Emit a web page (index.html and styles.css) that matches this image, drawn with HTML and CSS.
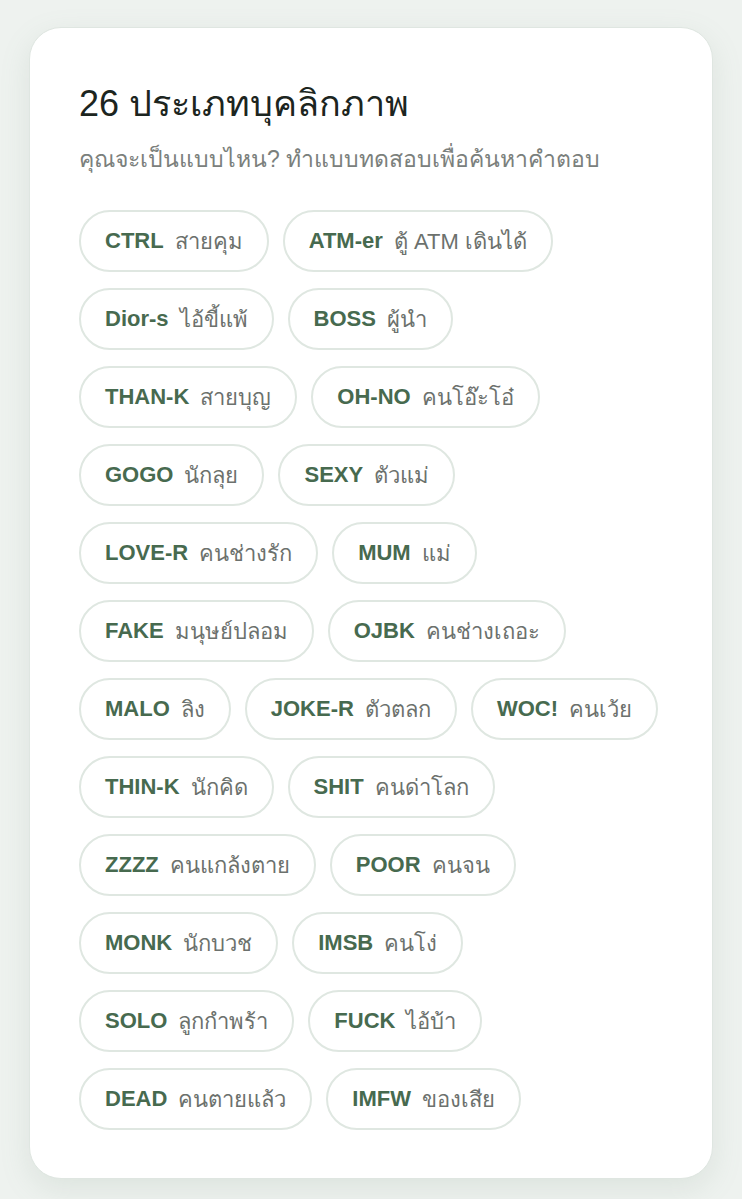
FILE: index.html
```html
<!DOCTYPE html>
<html lang="th">
<head>
  <meta charset="UTF-8" />
  <meta name="viewport" content="width=device-width, initial-scale=1" />
  <title>26 ประเภทบุคลิกภาพ</title>
  <link rel="stylesheet" href="styles.css">
</head>
<body>

  <div class="card">
    <h1>26 ประเภทบุคลิกภาพ</h1>
    <p class="sub">คุณจะเป็นแบบไหน? ทำแบบทดสอบเพื่อค้นหาคำตอบ</p>

    <div class="chips">
      <span class="chip"><b>CTRL</b> สายคุม</span>
      <span class="chip"><b>ATM-er</b> ตู้ ATM เดินได้</span>
      <span class="chip"><b>Dior-s</b> ไอ้ขี้แพ้</span>
      <span class="chip"><b>BOSS</b> ผู้นำ</span>
      <span class="chip"><b>THAN-K</b> สายบุญ</span>
      <span class="chip"><b>OH-NO</b> คนโอ๊ะโอ๋</span>
      <span class="chip"><b>GOGO</b> นักลุย</span>
      <span class="chip"><b>SEXY</b> ตัวแม่</span>
      <span class="chip"><b>LOVE-R</b> คนช่างรัก</span>
      <span class="chip"><b>MUM</b> แม่</span>
      <span class="chip"><b>FAKE</b> มนุษย์ปลอม</span>
      <span class="chip"><b>OJBK</b> คนช่างเถอะ</span>
      <span class="chip"><b>MALO</b> ลิง</span>
      <span class="chip"><b>JOKE-R</b> ตัวตลก</span>
      <span class="chip"><b>WOC!</b> คนเว้ย</span>
      <span class="chip"><b>THIN-K</b> นักคิด</span>
      <span class="chip"><b>SHIT</b> คนด่าโลก</span>
      <span class="chip"><b>ZZZZ</b> คนแกล้งตาย</span>
      <span class="chip"><b>POOR</b> คนจน</span>
      <span class="chip"><b>MONK</b> นักบวช</span>
      <span class="chip"><b>IMSB</b> คนโง่</span>
      <span class="chip"><b>SOLO</b> ลูกกำพร้า</span>
      <span class="chip"><b>FUCK</b> ไอ้บ้า</span>
      <span class="chip"><b>DEAD</b> คนตายแล้ว</span>
      <span class="chip"><b>IMFW</b> ของเสีย</span>
    </div>
  </div>

</body>
</html>
```

FILE: styles.css
```css
body {
  font-family: "Liberation Sans", "Noto Sans", sans-serif;
  margin: 0;
  background-color: #eef2ef;
  padding: 27px 29px 22px;
}

.card {
  background: white;
  border: 1px solid #dfe6e1;
  border-radius: 32px;
  box-shadow: 0 10px 30px rgba(120, 150, 130, 0.15);
  padding: 54px 49px 48px;
}

h1 {
  margin: 0;
  font-size: 36px;
  font-weight: normal;
  color: #1c2520;
  line-height: 44px;
}

.sub {
  margin: 18px 0 0;
  font-size: 23px;
  color: #7b807c;
  line-height: 30px;
}

/* personality chips */
.chips {
  display: flex;
  flex-wrap: wrap;
  gap: 16px 14px;
  margin-top: 36px;
}

.chip {
  display: flex;
  align-items: center;
  gap: 11px;
  height: 58px;
  padding: 0 24px;
  border: 2px solid #dfe7e1;
  border-radius: 31px;
  font-size: 22px;
  color: #6c716d;
}

.chip b {
  color: #476a4f;
  font-weight: bold;
}
```
